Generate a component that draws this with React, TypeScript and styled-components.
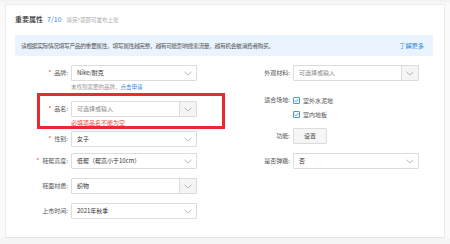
import React from "react";
import styled, { createGlobalStyle, css } from "styled-components";

const GlobalStyle = createGlobalStyle`
  html, body {
    margin: 0;
    padding: 0;
    background: #fafafa;
    font-family: "Noto Sans CJK SC", "Noto Sans", sans-serif;
    color: #333;
  }
  * { box-sizing: border-box; }
`;

interface ISelect {
  value?: string;
  placeholder?: string;
  split?: boolean;
}

interface ICheck {
  label: string;
}

const App: React.FC = () => {
  return (
    <>
      <GlobalStyle />
      <TopStrip />
      <Card>
        <Header>
          <Title>重要属性</Title>
          <Count>7/10</Count>
          <Hint>填完*项即可发布上架</Hint>
        </Header>
        <Banner>
          <span>请根据实际情况填写产品的重要属性，填写属性越完整，越有可能影响搜索流量，越有机会被消费者购买。</span>
          <BannerLink>了解更多</BannerLink>
        </Banner>
        <Form>
          <Column>
            <FormItem $space={10}>
              <Label $required>品牌:</Label>
              <Control>
                <Select value="Nike/耐克" />
                <Tip>
                  未找到需要的品牌，<TipLink>点击申请</TipLink>
                </Tip>
              </Control>
            </FormItem>
            <FormItem $space={4} $highlight>
              <Label $required>品名:</Label>
              <Control>
                <Select placeholder="可选择或输入" split />
                <ErrorTip>必填项品名不能为空</ErrorTip>
              </Control>
            </FormItem>
            <FormItem $space={6}>
              <Label $required>性别:</Label>
              <Control>
                <Select value="女子" />
              </Control>
            </FormItem>
            <FormItem $space={9}>
              <Label $required>鞋帮高度:</Label>
              <Control>
                <Select value="低帮（帮高小于10cm）" />
              </Control>
            </FormItem>
            <FormItem $space={9}>
              <Label>鞋面材质:</Label>
              <Control>
                <Select value="织物" split />
              </Control>
            </FormItem>
            <FormItem $space={0}>
              <Label>上市时间:</Label>
              <Control>
                <Select value="2021年秋季" />
              </Control>
            </FormItem>
          </Column>
          <Column>
            <FormItem $space={12}>
              <Label>外观材料:</Label>
              <Control>
                <Select placeholder="可选择或输入" split />
              </Control>
            </FormItem>
            <FormItem $space={7}>
              <Label $compact>适合场地:</Label>
              <Control>
                <Check label="室外水泥地" />
                <Check label="室内地板" />
              </Control>
            </FormItem>
            <FormItem $space={9}>
              <Label>功能:</Label>
              <Control>
                <Button>设置</Button>
              </Control>
            </FormItem>
            <FormItem $space={0}>
              <Label>是否弹跳:</Label>
              <Control>
                <Select value="否" />
              </Control>
            </FormItem>
          </Column>
        </Form>
      </Card>
      <Footer />
    </>
  );
};

const Chevron: React.FC = () => (
  <svg width="8" height="5" viewBox="0 0 8 5">
    <path d="M0.5 0.8 L4 4 L7.5 0.8" fill="none" stroke="#a8a8a8" strokeWidth="0.8" />
  </svg>
);

const Select: React.FC<ISelect> = ({ value, placeholder, split }) => {
  return (
    <SelectBox>
      <SelectValue $placeholder={!value}>{value || placeholder}</SelectValue>
      <Arrow $split={!!split}>
        <Chevron />
      </Arrow>
    </SelectBox>
  );
};

const Check: React.FC<ICheck> = ({ label }) => {
  return (
    <CheckRow>
      <CheckBox>
        <svg width="6" height="5" viewBox="0 0 6 5">
          <path d="M0.6 2.6 L2.3 4.1 L5.4 0.7" fill="none" stroke="#2f86e0" strokeWidth="0.9" />
        </svg>
      </CheckBox>
      <span>{label}</span>
    </CheckRow>
  );
};

const TopStrip = styled.div`
  height: 4px;
  background: linear-gradient(#f1f1f1, #fafafa);
`;

const Card = styled.div`
  margin: 0 5px;
  height: 234px;
  background: #fff;
  border: 1px solid #ececec;
  border-bottom: 1px solid #e4e4e4;
  padding: 8px 9px 0 9px;
`;

const Header = styled.div`
  display: flex;
  align-items: baseline;
  height: 12px;
  line-height: 12px;
`;

const Title = styled.span`
  font-size: 7px;
  font-weight: 500;
  color: #333;
`;

const Count = styled.span`
  font-size: 7px;
  color: #2f86e0;
  margin-left: 4px;
`;

const Hint = styled.span`
  font-size: 5.5px;
  color: #aaa;
  margin-left: 5px;
`;

const Banner = styled.div`
  margin-top: 10px;
  height: 21px;
  margin-right: 2px;
  background: #eaf4fe;
  display: flex;
  align-items: center;
  justify-content: space-between;
  padding: 0 9px 0 6px;
  font-size: 5.8px;
  letter-spacing: -0.42px;
  color: #555;
  white-space: nowrap;
`;

const BannerLink = styled.span`
  color: #2f86e0;
  font-size: 6.2px;
  letter-spacing: 0;
`;

const Form = styled.div`
  display: grid;
  grid-template-columns: 222px 1fr;
  margin-top: 9px;
`;

const Column = styled.div`
  display: flex;
  flex-direction: column;
`;

const FormItem = styled.div<{ $space: number; $highlight?: boolean }>`
  position: relative;
  display: flex;
  align-items: flex-start;
  margin-bottom: ${(p) => p.$space}px;

  ${(p) =>
    p.$highlight &&
    css`
      &::after {
        content: "";
        position: absolute;
        top: -8px;
        left: 22px;
        right: 12px;
        bottom: -2px;
        border: 3px solid #ea2a2f;
        pointer-events: none;
      }
    `}
`;

const Label = styled.div<{ $required?: boolean; $compact?: boolean }>`
  width: 53px;
  flex-shrink: 0;
  margin-right: 3px;
  text-align: right;
  font-size: 6px;
  line-height: ${(p) => (p.$compact ? "14px" : "16px")};
  color: #555;
  white-space: nowrap;

  &::before {
    content: ${(p) => (p.$required ? '"*"' : '""')};
    color: #f04040;
    margin-right: 3px;
  }
`;

const Control = styled.div`
  display: flex;
  flex-direction: column;
  width: 126px;
`;

const SelectBox = styled.div`
  display: flex;
  height: 16px;
  border: 1px solid #dcdcdc;
  border-radius: 1px;
  background: #fff;
`;

const SelectValue = styled.div<{ $placeholder: boolean }>`
  flex: 1;
  padding-left: 5px;
  font-size: 6px;
  line-height: 14px;
  color: ${(p) => (p.$placeholder ? "#888" : "#333")};
  white-space: nowrap;
  overflow: hidden;
`;

const Arrow = styled.div<{ $split: boolean }>`
  width: 17px;
  display: flex;
  align-items: center;
  justify-content: center;
  ${(p) =>
    p.$split &&
    css`
      background: #f5f5f5;
      border-left: 1px solid #dcdcdc;
    `}
`;

const Tip = styled.div`
  margin-top: 2px;
  font-size: 5.5px;
  line-height: 8px;
  color: #999;
  white-space: nowrap;
`;

const TipLink = styled.span`
  color: #2f86e0;
`;

const ErrorTip = styled.div`
  margin-top: 2px;
  font-size: 6px;
  line-height: 8px;
  color: #f04545;
  white-space: nowrap;
`;

const CheckRow = styled.div`
  display: flex;
  align-items: center;
  height: 14px;
  font-size: 6px;
  color: #555;
`;

const CheckBox = styled.div`
  width: 7px;
  height: 7px;
  margin-right: 3px;
  border: 1px solid #4b97e6;
  border-radius: 1px;
  background: #f4f9ff;
  display: flex;
  align-items: center;
  justify-content: center;
`;

const Button = styled.div`
  width: 34px;
  height: 16px;
  border: 1px solid #dcdcdc;
  border-radius: 1px;
  background: #f6f6f6;
  font-size: 6px;
  line-height: 14px;
  text-align: center;
  color: #444;
`;

const Footer = styled.div`
  height: 6px;
  background: #f5f5f5;
`;

export default App;
